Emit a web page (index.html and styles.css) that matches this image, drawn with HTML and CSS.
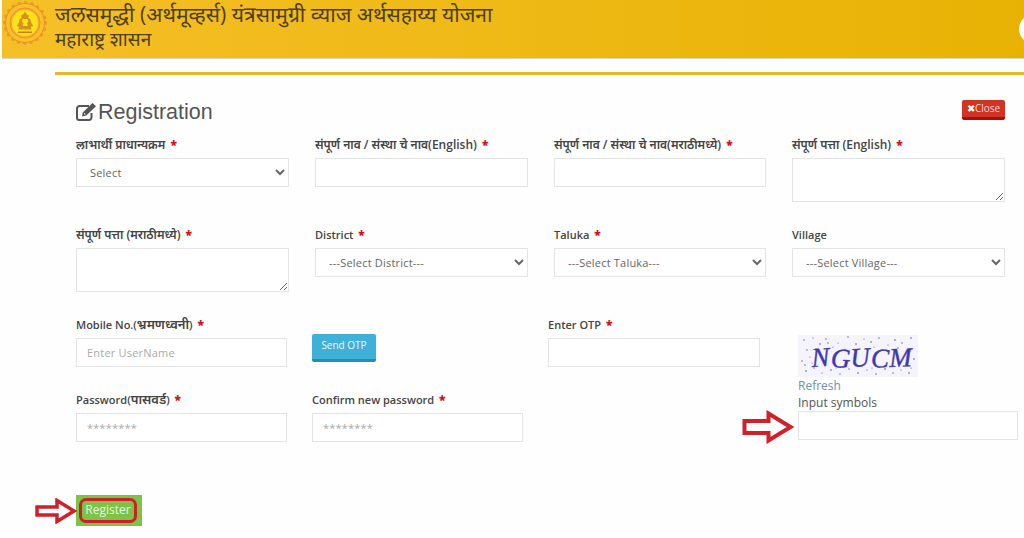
FILE: index.html
```html
<!DOCTYPE html>
<html lang="mr">
  <head>
    <meta charset="utf-8">
    <title>Registration</title>
    <link rel="stylesheet" href="styles.css">
  </head>

  <body>

    <header class="banner">
      <svg class="seal" width="46" height="46" viewBox="0 0 46 46">
        <circle cx="23" cy="23" r="20" fill="none" stroke="#eb9a22" stroke-width="4" stroke-linecap="round" stroke-dasharray="0 6.28"/>
        <circle cx="23" cy="23" r="19.500" fill="#f7c02c" stroke="#e8921f" stroke-width="1"/>
        <circle cx="23" cy="23" r="15" fill="#f6b02a" stroke="#e8921f" stroke-width="1"/>
        <circle cx="23" cy="23" r="13" fill="#fbe21a"/>
        <path d="M23 11.500l1.800 3 2.200 1-.8 2.500 2 1 1 3.500 2 3.500-2.500 1 1 2.500H16.300l1-2.500-2.500-1 2-3.500 1-3.500 2-1-.8-2.500 2.200-1z" fill="#d8921c"/>
        <path d="M20.500 19h5l1 3-1.500 1 1 3h-5.500l1-3-1.500-1z" fill="#fbe21a"/>
        <path d="M16 31.500h14v1.500H16z" fill="#cf7f1a"/>
      </svg>
      <div class="banner-text">
        <div class="scheme">जलसमृद्धी (अर्थमूव्हर्स) यंत्रसामुग्री व्याज अर्थसहाय्य योजना</div>
        <div class="govt">महाराष्ट्र शासन</div>
      </div>
      <div class="badge"></div>
    </header>

    <main class="panel">
      <div class="title-row">
        <h3 class="title">
          <svg class="edit-icon" width="22" height="20" viewBox="0 0 22 20">
            <path d="M15.500 11v4.500a2.500 2.500 0 0 1-2.500 2.500H3.500A2.500 2.500 0 0 1 1 15.500V6.500A2.500 2.500 0 0 1 3.500 4H13" fill="none" stroke="#555" stroke-width="2"/>
            <path d="M6 14.500l.8-4L16.500 1l3.500 3.300-9.700 9.300z" fill="#555"/>
            <path d="M8 12.500l1.800-.3-1.500-1.500z" fill="#fefefe"/>
          </svg>Registration
        </h3>
        <a class="btn-close"><span class="x">✖</span>Close</a>
      </div>

      <div class="grid-top">
        <div class="field">
          <label>लाभार्थी प्राधान्यक्रम <b>*</b></label>
          <select><option>Select</option></select>
        </div>
        <div class="field">
          <label>संपूर्ण नाव / संस्था चे नाव(English) <b>*</b></label>
          <input type="text">
        </div>
        <div class="field">
          <label>संपूर्ण नाव / संस्था चे नाव(मराठीमध्ये) <b>*</b></label>
          <input type="text">
        </div>
        <div class="field">
          <label>संपूर्ण पत्ता (English) <b>*</b></label>
          <textarea></textarea>
        </div>
        <div class="field">
          <label>संपूर्ण पत्ता (मराठीमध्ये) <b>*</b></label>
          <textarea></textarea>
        </div>
        <div class="field">
          <label class="latin">District <b>*</b></label>
          <select><option>---Select District---</option></select>
        </div>
        <div class="field">
          <label class="latin">Taluka <b>*</b></label>
          <select><option>---Select Taluka---</option></select>
        </div>
        <div class="field">
          <label class="latin">Village</label>
          <select><option>---Select Village---</option></select>
        </div>
      </div>

      <div class="grid-bottom">
        <div class="field">
          <label class="latin">Mobile No.(<span class="deva">भ्रमणध्वनी</span>) <b>*</b></label>
          <input type="text" placeholder="Enter UserName">
        </div>
        <div class="field otp-cell">
          <button class="btn-otp">Send OTP</button>
        </div>
        <div class="field">
          <label class="latin">Enter OTP <b>*</b></label>
          <input type="text">
        </div>
        <div class="captcha">
          <svg class="captcha-img" width="120" height="42" viewBox="0 0 120 42">
            <rect width="120" height="42" fill="#f5f4fb"/>
            <g fill="#5a50c0">
              <circle cx="6" cy="5" r=".7"/><circle cx="15" cy="3" r=".6"/><circle cx="22" cy="9" r=".8"/>
              <circle cx="28" cy="4" r=".7"/><circle cx="35" cy="12" r=".6"/><circle cx="30" cy="8" r=".7"/>
              <circle cx="50" cy="2" r=".7"/><circle cx="58" cy="9" r=".8"/><circle cx="66" cy="4" r=".6"/>
              <circle cx="73" cy="7" r=".8"/><circle cx="81" cy="3" r=".7"/><circle cx="90" cy="10" r=".6"/>
              <circle cx="97" cy="5" r=".8"/><circle cx="104" cy="8" r=".7"/><circle cx="113" cy="3" r=".8"/>
              <circle cx="9" cy="15" r=".7"/><circle cx="18" cy="14" r=".8"/><circle cx="4" cy="26" r=".7"/>
              <circle cx="112" cy="16" r=".7"/><circle cx="116" cy="24" r=".8"/><circle cx="108" cy="29" r=".6"/>
              <circle cx="8" cy="36" r=".8"/><circle cx="16" cy="33" r=".7"/><circle cx="24" cy="38" r=".6"/>
              <circle cx="33" cy="35" r=".8"/><circle cx="42" cy="39" r=".7"/><circle cx="51" cy="34" r=".7"/>
              <circle cx="60" cy="38" r=".8"/><circle cx="69" cy="35" r=".6"/><circle cx="78" cy="39" r=".7"/>
              <circle cx="87" cy="34" r=".8"/><circle cx="95" cy="38" r=".7"/><circle cx="103" cy="35" r=".6"/>
              <circle cx="111" cy="38" r=".8"/><circle cx="47" cy="14" r=".6"/><circle cx="84" cy="15" r=".7"/>
              <circle cx="40" cy="8" r=".6"/><circle cx="12" cy="22" r=".6"/><circle cx="7" cy="30" r=".7"/>
              <circle cx="26" cy="14" r=".6"/><circle cx="62" cy="14" r=".7"/><circle cx="76" cy="12" r=".6"/>
              <circle cx="100" cy="13" r=".7"/><circle cx="14" cy="28" r=".5"/><circle cx="113" cy="33" r=".6"/>
              <circle cx="38" cy="33" r=".5"/><circle cx="74" cy="33" r=".6"/><circle cx="92" cy="31" r=".5"/>
            </g>
            <text class="captcha-text" x="14" y="32" rotate="-4 3 -3 2 -2">NGUCM</text>
          </svg>
          <a class="refresh">Refresh</a>
          <span class="symbols">Input symbols</span>
          <input type="text">
        </div>
        <div class="field">
          <label class="latin">Password(<span class="deva">पासवर्ड</span>) <b>*</b></label>
          <input type="text" placeholder="********">
        </div>
        <div class="field">
          <label class="latin">Confirm new password <b>*</b></label>
          <input type="text" placeholder="********">
        </div>
      </div>

      <button class="btn-register"><span>Register</span></button>
    </main>

    <!-- red arrows drawn over the screenshot -->
    <svg class="arrow arrow-captcha" width="52" height="34" viewBox="0 0 52 34">
      <path d="M2.500 11h24V3.500l22 13.500-22 13.500V23h-24z" fill="#fff" stroke="#d0212b" stroke-width="4"/>
    </svg>
    <svg class="arrow arrow-register" width="42" height="26" viewBox="0 0 42 26">
      <path d="M2 9h20V2.500L39 13 22 23.500V17H2z" fill="#fff" stroke="#d0212b" stroke-width="3.500"/>
    </svg>

  </body>
</html>
```

FILE: styles.css
```css
body{
  margin: 0;
  background: #fefefe;
  color: #444;
  font-family: "Open Sans", "Noto Sans", "Noto Sans Devanagari", sans-serif;
  font-size: 12px;
  overflow: hidden;
}

.banner{
  height: 59px;
  box-sizing: border-box;
  margin-left: 2px;
  display: flex;
  overflow: hidden;
  background: linear-gradient(to right, #f5bf27, #e8b204);
  border-bottom: 1px solid #d8d4c8;
}

.seal{
  margin: 0 7px 0 0;
  flex: none;
}

.banner-text{
  color: #4f3f14;
}

.scheme{
  font-size: 21.100px;
  line-height: 28px;
}

.govt{
  margin-top: 2px;
  font-size: 19px;
  line-height: 18px;
}

.badge{
  margin: 14px -25px 0 auto;
  width: 30px;
  height: 30px;
  border-radius: 50%;
  background: #fff;
}

.panel{
  margin: 13px 0 0 55px;
  padding: 0 19px 0 21px;
  border-top: 3px solid #e3bb2a;
}

.title-row{
  height: 62px;
  display: flex;
  justify-content: space-between;
  align-items: flex-start;
}

.title{
  margin: 24px 0 0;
  font: normal 21.500px "Liberation Sans", sans-serif;
  line-height: 26px;
  color: #555;
  display: flex;
  align-items: center;
}

.edit-icon{
  flex: none;
}

.btn-close{
  margin-top: 25px;
  width: 43px;
  height: 20px;
  box-sizing: border-box;
  background: #d23322;
  border-bottom: 3px solid #a80f0a;
  border-radius: 2px;
  color: #f7dcd6;
  font-size: 10px;
  line-height: 17px;
  text-align: center;
}

.x{
  color: #fff;
}

.grid-top{
  display: grid;
  grid-template-columns: 213px 213px 212px 213px;
  grid-auto-rows: 90px;
  column-gap: 26px;
}

.grid-bottom{
  display: grid;
  grid-template-columns: 211px 211px 212px auto;
  grid-template-rows: 75px 75px;
  column-gap: 25px;
}

.field{
  display: flex;
  flex-direction: column;
}

.field label{
  height: 17px;
  margin-bottom: 3.500px;
  font-weight: 600;
  line-height: 16px;
  white-space: nowrap;
}

.field .latin{
  font-size: 11px;
  line-height: 15px;
}

.field .deva{
  font-size: 13px;
  line-height: 15px;
}

.field b{
  margin-left: 2px;
  font-size: 12px;
  line-height: 15px;
  color: #c9151b;
}

input, select, textarea{
  box-sizing: border-box;
  margin: 0;
  border: 1px solid #e4e4e4;
  background: #fff;
  color: #666;
  font-family: "Open Sans", sans-serif;
  font-size: 11px;
  letter-spacing: .2px;
}

input, select{
  height: 29px;
  padding: 0 10px;
}

select{
  padding-left: 9px;
}

textarea{
  height: 44.500px;
  display: block;
}

::placeholder{
  color: #aaa;
}

.otp-cell{
  padding-top: 17px;
}

.btn-otp{
  width: 64px;
  height: 28px;
  padding: 0 0 3px;
  border: 0;
  border-bottom: 3px solid #2b8bb3;
  border-radius: 2px;
  background: #3fb0d8;
  color: #eef8fb;
  font-family: "Open Sans", sans-serif;
  font-size: 10px;
}

.captcha{
  grid-column: 4;
  grid-row: 1 / span 2;
  padding: 18px 0 0 14px;
  margin-left: -1px;
  display: flex;
  flex-direction: column;
  width: 220px;
}

.captcha-img{
  display: block;
}

.captcha-text{
  font-family: "Liberation Serif", serif;
  font-style: italic;
  font-size: 27px;
  fill: #4237b0;
  stroke: #4237b0;
  stroke-width: .4px;
  letter-spacing: .6px;
}

.refresh{
  margin-top: 1px;
  color: #6d93ad;
  line-height: 16px;
}

.symbols{
  line-height: 17px;
  color: #555;
}

.btn-register{
  display: block;
  margin-top: 28px;
  width: 66px;
  height: 31px;
  padding: 3px;
  border: 0;
  background: #7cc34a;
  color: #e9f5df;
  font-family: "Open Sans", sans-serif;
  font-size: 12px;
}

.btn-register span{
  display: block;
  height: 100%;
  width: 58px;
  box-sizing: border-box;
  border: 3px solid #cf1f26;
  border-radius: 7px;
  line-height: 18px;
}

.arrow{
  position: absolute;
}

.arrow-captcha{
  left: 742px;
  top: 410px;
}

.arrow-register{
  left: 35px;
  top: 498px;
}
```
